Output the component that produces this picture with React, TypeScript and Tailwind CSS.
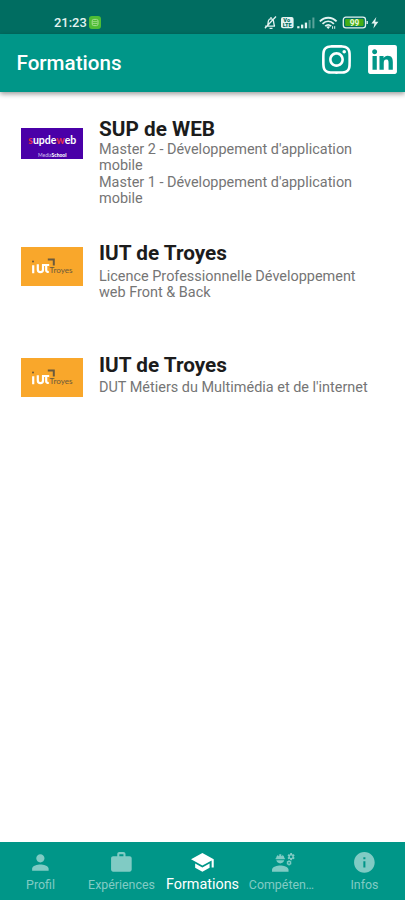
import { FaInstagram, FaLinkedin } from 'react-icons/fa';
import { MdEngineering, MdInfo, MdPerson, MdSchool, MdWork } from 'react-icons/md';
import type { IconType } from 'react-icons';

interface Formation {
  titre: string;
  lignes: string[];
  logo: 'supdeweb' | 'iut';
  // Hauteurs et espacements propres à chaque ligne
  className: string;
  texteClassName: string;
}

const formations: Formation[] = [
  {
    titre: 'SUP de WEB',
    lignes: ["Master 2 - Développement d'application mobile", "Master 1 - Développement d'application mobile"],
    logo: 'supdeweb',
    className: 'h-[124px]',
    texteClassName: 'pt-[0.75px]',
  },
  {
    titre: 'IUT de Troyes',
    lignes: ['Licence Professionnelle Développement web Front & Back'],
    logo: 'iut',
    className: 'h-[111.5px]',
    texteClassName: 'pt-[3.5px]',
  },
  {
    titre: 'IUT de Troyes',
    lignes: ["DUT Métiers du Multimédia et de l'internet"],
    logo: 'iut',
    className: 'h-[90px]',
    texteClassName: 'pt-[3.5px]',
  },
];

interface Onglet {
  nom: string;
  icone: IconType;
  actif?: boolean;
  labelClassName?: string;
}

const onglets: Onglet[] = [
  { nom: 'Profil', icone: MdPerson },
  { nom: 'Expériences', icone: MdWork },
  { nom: 'Formations', icone: MdSchool, actif: true },
  { nom: 'Compéten…', icone: MdEngineering, labelClassName: 'pr-[4px]' },
  { nom: 'Infos', icone: MdInfo },
];

function LogoSupDeWeb() {
  return (
    <svg viewBox="0 0 62 31" className="h-[31px] w-[62px]" fontFamily="Lato, sans-serif">
      <rect width="62" height="31" fill="#4a00a8" />
      <text x="7.3" y="16" fontSize="10.6" fontWeight="700" fill="#fff" textLength="48" lengthAdjust="spacingAndGlyphs">
        <tspan fill="#e5304b">s</tspan>upde<tspan fill="#e5304b">w</tspan>eb
      </text>
      <text x="17" y="28.7" fontSize="5" fill="#d3c0f0" textLength="28.5" lengthAdjust="spacingAndGlyphs">
        Media<tspan fontWeight="900" fill="#fff">School</tspan>
      </text>
    </svg>
  );
}

function LogoIut() {
  return (
    <svg viewBox="0 0 62 39" className="h-[39px] w-[62px]" fontFamily="Lato, sans-serif">
      <rect width="62" height="39" fill="#f9a72b" />
      <circle cx="12" cy="14.6" r="1" fill="#6b5a3c" />
      <path d="M12.2 18.2v8M16.8 17.2v5.3c0 3.6 5.2 3.6 5.2 0v-5.3M21 18h7.2M25.2 18v5.3q0 1.7 2.6 1.7" fill="none" stroke="#fff" strokeWidth="2.2" />
      <path d="M26.8 12.6h6v6" fill="none" stroke="#6b5a3c" strokeWidth="2" />
      <text x="28.6" y="26.2" fontSize="7.6" fill="#6b5a3c" textLength="23" lengthAdjust="spacingAndGlyphs">Troyes</text>
    </svg>
  );
}

function IconesStatut() {
  return (
    <svg viewBox="0 0 118 18" className="h-[18px] w-[118px]" fill="none" stroke="#e3f3f1">
      {/* Cloche barrée */}
      <path d="M1.2 12.2h9.8M3.3 12c1-1.4.7-4 1.2-5.4.7-2.1 4-2.3 4.9 0 .5 1.5.2 4 1.3 5.4M7 3v1.5M5.5 14.3h3M12 2.5 .9 14.2" strokeWidth="1.3" />
      {/* VoLTE */}
      <rect x="17" y="3" width="12.6" height="11.3" rx="2" fill="#e3f3f1" stroke="none" />
      <g fill="#006d61" stroke="none" fontFamily="Roboto, sans-serif" fontWeight="900" fontSize="5.6">
        <text x="19.3" y="8.4" textLength="6.8">Vo</text>
        <text x="18.7" y="13.3" textLength="9">LTE</text>
      </g>
      {/* Réseau */}
      <g fill="#e3f3f1" stroke="none">
        <rect x="33.2" y="12.2" width="2.3" height="2.1" />
        <rect x="37" y="10.6" width="2.3" height="3.7" />
        <rect x="40.8" y="8.6" width="2.3" height="5.7" />
        <rect x="44.6" y="6" width="2" height="8.3" opacity=".4" />
        <rect x="48.4" y="3.5" width="2" height="10.8" opacity=".4" />
      </g>
      {/* Wifi */}
      <path d="M55.8 7.4c4.9-4.9 11.9-4.9 16.8 0M58.5 9.9c3.4-3.3 8-3.3 11.4 0M61.2 12.2c1.9-1.7 4.1-1.7 6 0" strokeWidth="1.8" />
      <path d="m62.2 12.8 2 2.2 2-2.2q-2-1.2-4 0Z" fill="#e3f3f1" stroke="none" />
      <path d="M68.6 12.2v2.6M70.7 12.2v2.6" strokeWidth="1" />
      {/* Batterie */}
      <rect x="79.3" y="3.2" width="22.2" height="10.6" rx="2.6" strokeWidth="1.3" />
      <rect x="81.2" y="5" width="18.4" height="7" rx="1" fill="#45ad16" stroke="none" />
      <path d="M103.2 7v3" strokeWidth="1.4" />
      <text x="85.7" y="11.8" fontFamily="Roboto, sans-serif" fontSize="8.3" fontWeight="700" fill="#e9f8df" stroke="none">99</text>
      <path d="m112.3 3-4.9 6.6h3l-1 4.8 5-6.7h-3.2Z" fill="#e3f3f1" stroke="none" />
    </svg>
  );
}

function BarreStatut() {
  return (
    <div className="flex h-[34px] items-end justify-between bg-[#006d61] pb-[3px] pl-[54px] pr-[23px]">
      <div className="flex items-center gap-[2.5px] text-[#e3f3f1]">
        <span className="text-[12.9px] font-medium leading-[17px]">21:23</span>
        <svg viewBox="0 0 12 13" className="h-[13px] w-[12px]">
          <rect width="12" height="13" rx="3" fill="#4ebd35" />
          <rect x="3.2" y="3.4" width="5.8" height="6.2" rx="1.5" fill="none" stroke="#a5dd91" />
          <path d="M3.5 5.6h5M3.5 7.5h5" stroke="#a5dd91" strokeWidth=".8" />
        </svg>
      </div>
      <div className="-mb-px">
        <IconesStatut />
      </div>
    </div>
  );
}

function CarteFormation({ titre, lignes, logo, className, texteClassName }: Formation) {
  return (
    <li className={`flex items-start gap-[16.5px] pl-[20.5px] ${className}`}>
      <div className={logo === 'supdeweb' ? 'pt-[11px]' : 'pt-[5.5px]'}>
        {logo === 'supdeweb' ? <LogoSupDeWeb /> : <LogoIut />}
      </div>
      <div className="w-[280px]">
        <h2 className="text-[20.75px] font-bold leading-6 text-[#1c1c1c]">{titre}</h2>
        <div className={`text-[14.45px] leading-[16.5px] text-[#757575] ${texteClassName}`}>
          {lignes.map((ligne) => (
            <p key={ligne}>{ligne}</p>
          ))}
        </div>
      </div>
    </li>
  );
}

export default function App() {
  return (
    <div className="flex h-[900px] w-[405px] flex-col overflow-hidden bg-white font-['Roboto',sans-serif]">
      <BarreStatut />

      <header className="z-10 flex h-[57.5px] shrink-0 items-center justify-between bg-[#009688] pl-[16.5px] pr-[6.5px] text-white shadow-[0_2px_5px_rgba(0,0,0,0.4)]">
        <h1 className="pt-[2px] text-[20.6px] font-medium">Formations</h1>
        <div className="flex gap-[12.5px] pb-[6px]">
          <FaInstagram className="size-[33px]" />
          <FaLinkedin className="size-[33px]" />
        </div>
      </header>

      <main className="flex-1 pt-[25.5px]">
        <ul>
          {formations.map((formation, i) => (
            <CarteFormation key={i} {...formation} />
          ))}
        </ul>
      </main>

      <nav className="grid h-[58px] shrink-0 grid-cols-5 bg-[#009688]">
        {onglets.map(({ nom, icone: Icone, actif, labelClassName = '' }) => (
          <div
            key={nom}
            className={`flex flex-col items-center whitespace-nowrap pt-[8px] ${actif ? 'text-white' : 'text-[#80cbc4]'}`}
          >
            <Icone className="size-[24.75px] shrink-0" />
            <span className={`leading-[19px] ${actif ? 'text-[14.4px]' : 'text-[12.4px]'} ${labelClassName}`}>{nom}</span>
          </div>
        ))}
      </nav>
    </div>
  );
}
